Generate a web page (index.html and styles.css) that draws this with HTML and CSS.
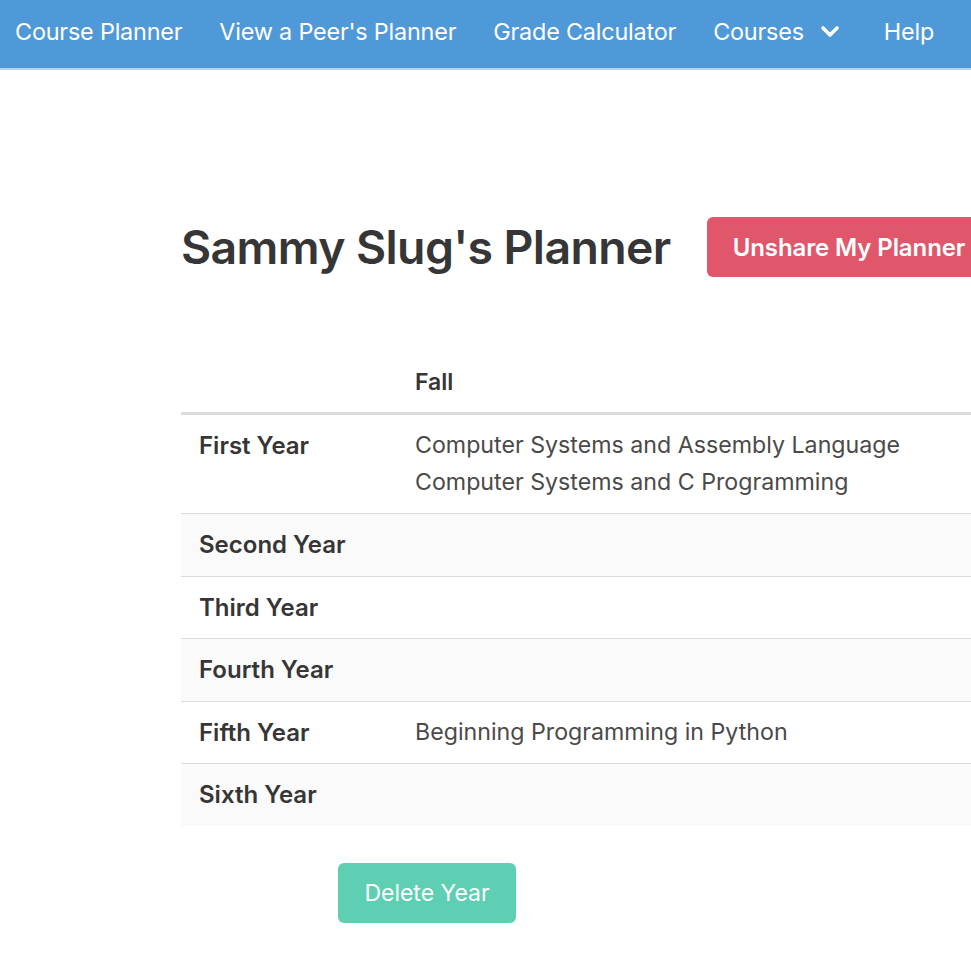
FILE: index.html
```html
<!DOCTYPE html>
<html lang="en">
<head>
<meta charset="utf-8">
<title>Sammy Slug's Planner</title>
<link rel="stylesheet" href="styles.css">
</head>
<body>
<nav class="navbar">
  <a class="nav-item">Course Planner</a>
  <a class="nav-item">View a Peer's Planner</a>
  <a class="nav-item">Grade Calculator</a>
  <a class="nav-item nav-dropdown">Courses
    <svg class="chevron" viewBox="0 0 20 14" width="20" height="14" aria-hidden="true"><path d="M3 3 L10 10 L17 3" fill="none" stroke="#fff" stroke-width="3.6" stroke-linecap="round" stroke-linejoin="round"/></svg>
  </a>
  <a class="nav-item">Help</a>
</nav>
<main class="page">
  <div class="title-row">
    <h1 class="title">Sammy Slug's Planner</h1>
    <button class="button is-danger">Unshare My Planner</button>
  </div>
  <table class="planner">
    <thead>
      <tr><th class="year-col"></th><th>Fall</th></tr>
    </thead>
    <tbody>
      <tr><th>First Year</th><td><div>Computer Systems and Assembly Language</div><div>Computer Systems and C Programming</div></td></tr>
      <tr><th>Second Year</th><td></td></tr>
      <tr><th>Third Year</th><td></td></tr>
      <tr><th>Fourth Year</th><td></td></tr>
      <tr><th>Fifth Year</th><td><div>Beginning Programming in Python</div></td></tr>
      <tr><th>Sixth Year</th><td></td></tr>
    </tbody>
  </table>
  <div class="actions">
    <button class="button is-primary">Delete Year</button>
  </div>
</main>
</body>
</html>
```

FILE: styles.css
```css
html, body {
  margin: 0;
  padding: 0;
  overflow: hidden;
  background: #fff;
}
body {
  font-family: "Inter", "Noto Sans", sans-serif;
  color: #4a4a4a;
  font-size: 24px;
  line-height: 1.5;
  width: 971px;
  height: 971px;
}
.navbar {
  height: 70px;
  box-sizing: border-box;
  background: #4f99d8;
  border-bottom: 2px solid #b9d6ef;
  display: flex;
  align-items: center;
  padding: 0 0 4px 15px;
  gap: 37px;
  white-space: nowrap;
}
.nav-item {
  color: #fff;
  font-size: 23.4px;
  letter-spacing: -0.2px;
  display: flex;
  align-items: center;
}
.chevron {
  margin-left: 16px;
  margin-right: 7px;
}
.page {
  padding: 0 0 0 181px;
}
.title-row {
  display: flex;
  align-items: center;
  margin-top: 147px;
  white-space: nowrap;
}
.title {
  font-size: 46.4px;
  font-weight: 600;
  color: #363636;
  margin: 0;
  line-height: 60px;
  letter-spacing: -0.6px;
}
.button {
  font-family: inherit;
  font-size: 24px;
  height: 60px;
  border: none;
  border-radius: 6px;
  color: #fff;
  cursor: pointer;
  white-space: nowrap;
}
.is-danger {
  background: #e0566b;
  font-weight: 600;
  margin-left: 36px;
  padding: 0 26px;
  letter-spacing: -0.1px;
}
.is-primary {
  background: #5ecfb2;
  font-size: 23px;
  padding: 0 25px;
  width: 178px;
}
.planner {
  margin-top: 75px;
  border-collapse: collapse;
  width: 900px;
  color: #363636;
}
.planner th, .planner td {
  text-align: left;
  vertical-align: top;
  padding: 12px 18px;
  border-bottom: 1.5px solid #dbdbdb;
  line-height: 37.5px;
}
.planner th {
  font-weight: 600;
  font-size: 24px;
}
.planner td {
  font-weight: 400;
  font-size: 23.2px;
  color: #4a4a4a;
}
.planner tbody tr:first-child td {
  line-height: 37px;
}
.planner thead th {
  border-bottom: 3px solid #dbdbdb;
  font-size: 23px;
  line-height: 36px;
}
.planner .year-col {
  width: 180px;
}
.planner tbody tr:nth-child(even) {
  background: #fafafa;
}
.planner tbody tr:last-child th,
.planner tbody tr:last-child td {
  border-bottom: none;
}
.actions {
  margin-top: 37px;
  padding-left: 157px;
}
```
